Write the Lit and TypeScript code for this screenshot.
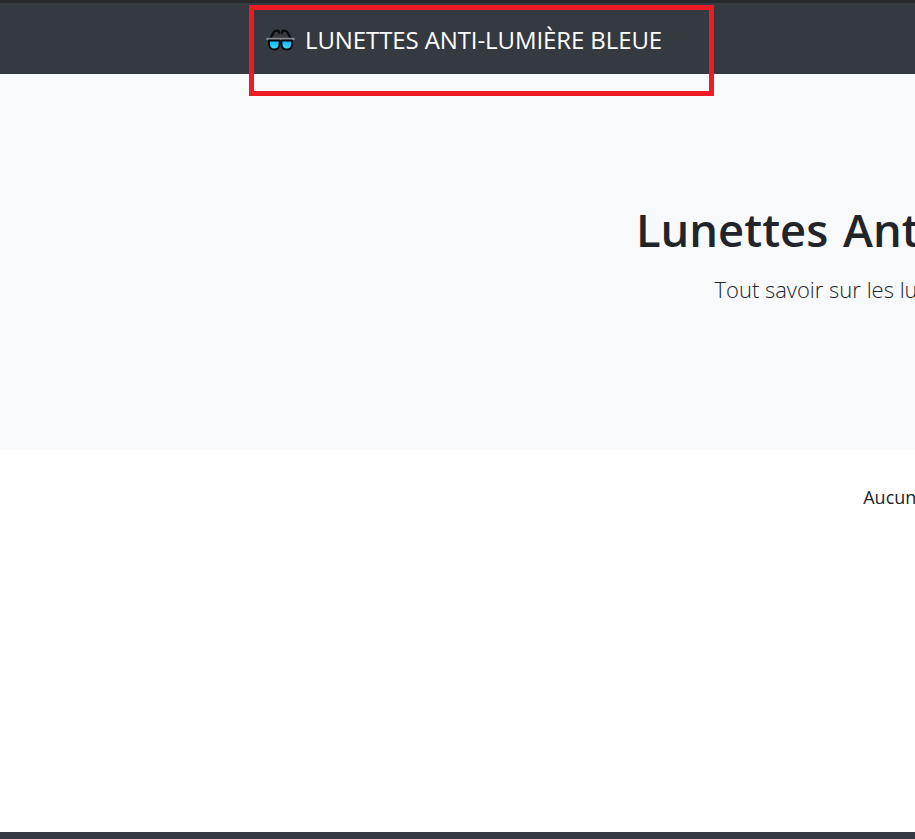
import { LitElement, css, html } from "lit";
import { customElement } from "lit/decorators.js";

@customElement("app-root")
export class AppRoot extends LitElement {
  static styles = css`
    :host {
      display: block;
      position: relative;
      width: 915px;
      height: 839px;
      overflow: hidden;
      background: #fff;
      color: #212529;
      font-family: "Open Sans", "Noto Sans", sans-serif;
    }

    .page {
      display: flex;
      flex-direction: column;
      width: 1880px;
      height: 839px;
    }

    .topline {
      height: 3px;
      background: #26282b;
    }

    .navbar {
      display: flex;
      align-items: center;
      height: 71px;
      padding-left: 266px;
      background: #343a40;
      color: #fff;
    }

    .brand {
      display: flex;
      align-items: center;
      gap: 10px;
      font-size: 24px;
      line-height: 32px;
      letter-spacing: -0.1px;
      white-space: nowrap;
      padding-top: 2px;
    }

    .brand svg {
      display: block;
      width: 29px;
      height: 24px;
    }

    .hero {
      display: flex;
      flex-direction: column;
      align-items: center;
      height: 376px;
      padding-top: 125px;
      box-sizing: border-box;
      background: #f8f9fa;
    }

    h1 {
      margin: 0;
      padding-left: 22px;
      font-size: 45.3px;
      font-weight: 600;
      line-height: 62px;
      word-spacing: 3px;
      white-space: nowrap;
    }

    .lead {
      margin: 12px 0 0;
      font-size: 22px;
      font-weight: 300;
      line-height: 32px;
      white-space: nowrap;
    }

    main {
      flex: 1;
      padding: 35px 0 0 20px;
      text-align: center;
      font-size: 18px;
      line-height: 24px;
    }

    footer {
      height: 7px;
      background: #343a40;
    }

    .highlight {
      position: absolute;
      left: 249px;
      top: 5px;
      width: 465px;
      height: 91px;
      box-sizing: border-box;
      border: 5px solid #ed1c24;
    }
  `;

  render() {
    return html`
      <div class="page">
        <div class="topline"></div>
        <nav class="navbar">
          <div class="brand">
            <svg viewBox="0 0 29 24" aria-hidden="true">
              <defs>
                <linearGradient id="lens" x1="0" y1="0" x2="0" y2="1">
                  <stop offset="0" stop-color="#12b0ff" />
                  <stop offset="1" stop-color="#38e0ff" />
                </linearGradient>
              </defs>
              <path
                d="M4 11 L7.5 4.5 Q9 1.8 12.5 2.8 L13.2 5 M25 11 L21.5 4.5 Q20 1.8 16.5 2.8 L15.8 5"
                fill="none"
                stroke="#08090b"
                stroke-width="2.2"
                stroke-linecap="round"
                stroke-linejoin="round"
              />
              <path
                d="M1.5 11 H27.5"
                fill="none"
                stroke="#85888c"
                stroke-width="2.6"
                stroke-linecap="round"
              />
              <path
                d="M3 12.5 H13.5 V15.5 Q13.5 21.5 8.2 21.5 Q3 21.5 3 15.5 Z M15.5 12.5 H26 V15.5 Q26 21.5 20.8 21.5 Q15.5 21.5 15.5 15.5 Z"
                fill="url(#lens)"
                stroke="#050607"
                stroke-width="1.8"
                stroke-linejoin="round"
              />
            </svg>
            <span>LUNETTES ANTI-LUMIÈRE BLEUE</span>
          </div>
        </nav>
        <section class="hero">
          <h1>Lunettes Anti-Lumière Bleue</h1>
          <p class="lead">Tout savoir sur les lunettes anti-lumière bleue</p>
        </section>
        <main>Aucun article trouvé.</main>
        <footer></footer>
      </div>
      <div class="highlight"></div>
    `;
  }
}
